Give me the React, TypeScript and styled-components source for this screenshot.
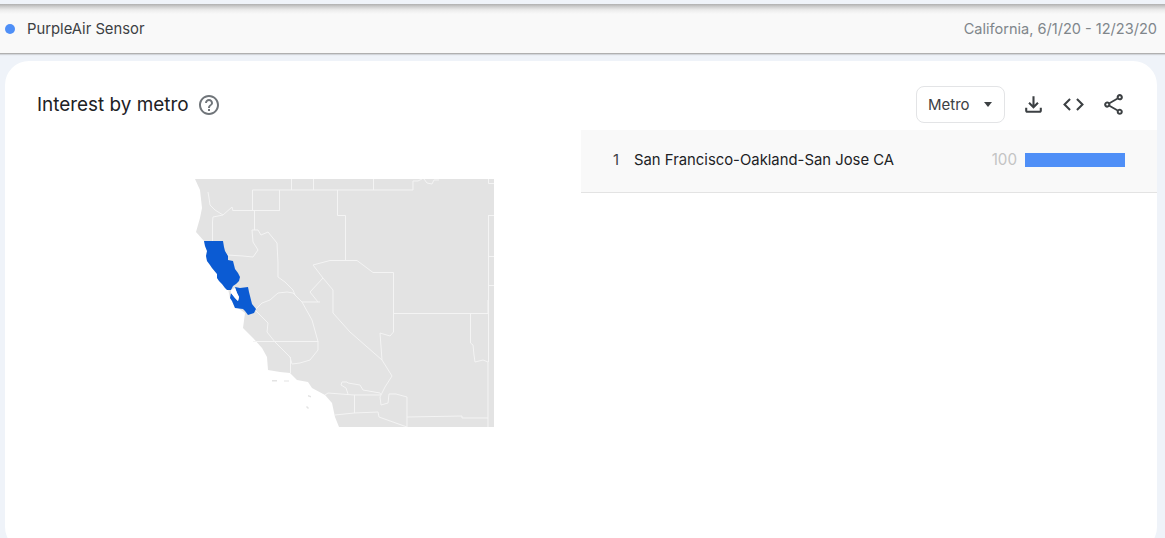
import styled, { createGlobalStyle } from 'styled-components';

const GlobalStyle = createGlobalStyle`
  html, body {
    margin: 0;
    padding: 0;
    height: 538px;
    overflow: hidden;
    background: #eff3f9;
    font-family: Inter, "Liberation Sans", sans-serif;
  }
`;

const Page = styled.div`
  height: 538px;
  overflow: hidden;
  background: #eff3f9;
  padding-top: 4px;
  box-sizing: border-box;
`;

const TermBar = styled.header`
  height: 49px;
  padding: 0 8px 0 5px;
  display: flex;
  align-items: center;
  justify-content: space-between;
  background: linear-gradient(#b0b0b0 0, #d2d2d2 3px, #ececec 6px, #f9f9f9 10px);
  border-bottom: 1px solid #b0b0b0;
  box-shadow: 0 1px 1px rgba(0, 0, 0, 0.12);
`;

const TermName = styled.div`
  display: flex;
  align-items: center;
  gap: 12px;
  font-size: 14.8px;
  color: #3c4043;
`;

const Dot = styled.span`
  width: 10px;
  height: 10px;
  border-radius: 50%;
  background: #4f8ff7;
`;

const TermMeta = styled.div`
  font-size: 14.55px;
  color: #80868b;
`;

const Card = styled.section`
  margin: 7px 8px 0 5px;
  height: 490px;
  background: #fff;
  border-radius: 24px;
  overflow: hidden;
`;

const CardHeader = styled.div`
  height: 69px;
  padding: 25px 32px 0;
  box-sizing: border-box;
  display: flex;
  justify-content: space-between;
  align-items: flex-start;
`;

const TitleGroup = styled.div`
  display: flex;
  align-items: center;
  gap: 8px;
  height: 37px;
`;

const Title = styled.h2`
  margin: 0;
  font-size: 18.9px;
  font-weight: 400;
  color: #202124;
`;

const Actions = styled.div`
  display: flex;
  align-items: center;
`;

const SelectBox = styled.div`
  width: 89px;
  height: 37px;
  box-sizing: border-box;
  padding: 0 12px 0 11px;
  display: flex;
  align-items: center;
  justify-content: space-between;
  border: 1px solid #e3e4e6;
  border-radius: 8px;
  font-size: 15px;
  color: #3c4043;
`;

const Caret = styled.span`
  width: 0;
  height: 0;
  border-left: 4.5px solid transparent;
  border-right: 4.5px solid transparent;
  border-top: 5px solid #3c4043;
`;

const IconRow = styled.div`
  display: flex;
  gap: 15px;
  margin-left: 16px;
  margin-right: -1px;
`;

const IconSlot = styled.svg`
  display: block;
  width: 25px;
  height: 25px;
  fill: #3c4043;
`;

const HelpIcon = styled(IconSlot)`
  width: 24px;
  height: 24px;
  fill: #70757a;
`;

const Body = styled.div`
  display: grid;
  grid-template-columns: 576px 1fr;
`;

const MapPane = styled.div`
  padding: 49px 0 0 190px;
`;

const MapSvg = styled.svg`
  display: block;
  width: 299px;
  height: 248px;
`;

const Row = styled.div`
  height: 63px;
  box-sizing: border-box;
  display: flex;
  align-items: center;
  padding: 0 32px 3px;
  background: #f9f9f9;
  border-bottom: 1px solid #e3e3e3;
  font-size: 14.85px;
  color: #202124;
`;

const Rank = styled.span`
  width: 21px;
  color: #3c4043;
`;

const Place = styled.span`
  flex: 1;
`;

const Score = styled.span`
  color: #c4c4c4;
  margin-right: 8px;
  font-size: 15.2px;
`;

const BarTrack = styled.div`
  width: 100px;
  height: 14px;
  background: #4f8ff7;
`;

const LAND =
  'M195 179 L200 190 L202 208 L200 218 L196 232 L204 241 L205 246 L207 251 L206 256 L207 261 L210 265 L212 268 L217 274 L217 278 L222 284 L225 288 L228 289 L230 298 L232 301 L235 308 L238 308 L245 313 L243 328 L253 338 L262 348 L267 357 L268 370 L280 372 L290 373 L297 380 L308 382 L312 388 L325 395 L332 403 L335 417 L339 427 L494 427 L494 179 Z';

const BLUE_NORTH =
  'M204 241 L223 241 L224 247 L225 251 L228 256 L228 260 L233 261 L234 265 L235 269 L238 273 L240 277 L239 281 L236 284 L233 286 L231 290 L227 290 L225 288 L222 284 L219 281 L217 278 L217 274 L212 268 L210 265 L207 261 L206 256 L207 251 L205 246 Z';

const BLUE_SOUTH =
  'M235 287 L240 288 L248 287 L249 292 L250 296 L252 304 L256 309 L254 313 L248 315 L245 311 L243 309 L235 308 L232 301 L230 298 L231 293 L235 298 L238 301 L239 297 L237 293 Z';

const BAY = 'M231 290 L235 288 L237 293 L239 297 L238 301 L235 298 L231 293 Z';

const BORDERS = [
  'M291.5 179 V190 M313.5 179 V190 M373.5 179 V190',
  'M252.5 190 H413 L413 181 L418 181 L422 179 M424 179 L427 183 L432 184 L434 180 L439 180',
  'M252.5 190 V210.5 M279.5 190 V211 M233 210.5 H279 M254.5 211 V230',
  'M208 192 L209 198 L210 205 L215 210 L223 215 L232 207 L233 211',
  'M223 215 L213 217 L212.5 222 V241',
  'M252 230 L253 242 L258 250 L253 257 L243 256 L227 255',
  'M252 230 H258 L261 235 L268 232 L277 243 L278 263 L278 277 L285 282 L293 290 L295 295 L302 302 H320',
  'M337.5 190 V215.5 H345.5 V260.5 H330 L313 265 L323 278 L310 292 L318 302',
  'M323 278 L333 290 V313 L350 332 L382 360',
  'M345 260.5 H357 L373 272.5 H393.5 V332 L390 336 L380 333 L382 360 L387 368 L392 376 L385 387 L380 397 L381 405 L388 403 L389 394 H396 L407 397 V427',
  'M393.5 313.5 H488 V300 M488.5 179 V183.5 H494 M488.5 215 V362 M488.5 215.5 H494 M488.5 256.5 H494 M488.5 285.5 H494',
  'M470.5 313 V343 L473 345 L474 355 L475 362 L483 360 L488 362 V427',
  'M253 341.5 H318 L312 320 L302 302 M318 341 V350 L310 360 L300 363 L292 364 L290 357 L275 342 L267 332 L268 323 L255 310',
  'M290.5 357 V373',
  'M255 310 L262 303 L270 300 L278 293 L287 292 L293 293 L302 302',
  'M325 395 L328 393 L354 395 H380 M354.5 395 V413 M335 415 L354 413 L378 412 L379 417 L407 427 M407 417 L462 416 V418 H488',
  'M342 382 H347 L348 383 L360 385 L363 390 L380 393 L381 395 M342 382 L341 385 L346 388 L348 394',
];

function InterestMap() {
  return (
    <MapSvg viewBox="195 179 299 248">
      <path d={LAND} fill="#e3e3e3" />
      <path d="M272 380 h5 v1.5 h-5z M284 380.5 h5 v1 h-5z M308 395 l3 1 v1.5 l-3 -1z M307 406 l2 2 -1 1 -2 -2z" fill="#e3e3e3" />
      {BORDERS.map((d) => (
        <path key={d} d={d} fill="none" stroke="#f4f4f4" strokeWidth="1" />
      ))}
      <path d={BLUE_NORTH} fill="#0b5bd3" />
      <path d={BLUE_SOUTH} fill="#0b5bd3" />
      <path d={BAY} fill="#fff" />
    </MapSvg>
  );
}

export default function App() {
  return (
    <Page>
      <GlobalStyle />
      <TermBar>
        <TermName>
          <Dot />
          <span>PurpleAir Sensor</span>
        </TermName>
        <TermMeta>California, 6/1/20 - 12/23/20</TermMeta>
      </TermBar>
      <Card>
        <CardHeader>
          <TitleGroup>
            <Title>Interest by metro</Title>
            <HelpIcon viewBox="0 0 24 24">
              <path d="M11 18h2v-2h-2v2zm1-16C6.48 2 2 6.48 2 12s4.48 10 10 10 10-4.48 10-10S17.52 2 12 2zm0 18c-4.41 0-8-3.59-8-8s3.59-8 8-8 8 3.59 8 8-3.59 8-8 8zm0-14c-2.21 0-4 1.79-4 4h2c0-1.1.9-2 2-2s2 .9 2 2c0 2-3 1.75-3 5h2c0-2.25 3-2.5 3-5 0-2.21-1.79-4-4-4z" />
            </HelpIcon>
          </TitleGroup>
          <Actions>
            <SelectBox>
              Metro
              <Caret />
            </SelectBox>
            <IconRow>
              <IconSlot viewBox="0 0 24 24">
                <path d="M18 15v3H6v-3H4v3c0 1.1.9 2 2 2h12c1.1 0 2-.9 2-2v-3h-2zm-1-4l-1.41-1.41L13 12.17V4h-2v8.17L8.41 9.59 7 11l5 5 5-5z" />
              </IconSlot>
              <IconSlot viewBox="0 0 24 24">
                <path d="M9.4 16.6L4.8 12l4.6-4.6L8 6l-6 6 6 6 1.4-1.4zm5.2 0l4.6-4.6-4.6-4.6L16 6l6 6-6 6-1.4-1.4z" />
              </IconSlot>
              <IconSlot viewBox="0 0 24 24">
                <path d="M18 16.08c-.76 0-1.44.3-1.96.77L8.91 12.7c.05-.23.09-.46.09-.7s-.04-.47-.09-.7l7.05-4.11c.54.5 1.25.81 2.04.81 1.66 0 3-1.34 3-3s-1.34-3-3-3-3 1.34-3 3c0 .24.04.47.09.7L8.04 9.81C7.5 9.31 6.79 9 6 9c-1.66 0-3 1.34-3 3s1.34 3 3 3c.79 0 1.5-.31 2.04-.81l7.12 4.16c-.05.21-.08.43-.08.65 0 1.61 1.31 2.92 2.92 2.92 1.61 0 2.92-1.31 2.92-2.92s-1.31-2.92-2.92-2.92zM18 4c.55 0 1 .45 1 1s-.45 1-1 1-1-.45-1-1 .45-1 1-1zM6 13c-.55 0-1-.45-1-1s.45-1 1-1 1 .45 1 1-.45 1-1 1zm12 7.02c-.55 0-1-.45-1-1s.45-1 1-1 1 .45 1 1-.45 1-1 1z" />
              </IconSlot>
            </IconRow>
          </Actions>
        </CardHeader>
        <Body>
          <MapPane>
            <InterestMap />
          </MapPane>
          <div>
            <Row>
              <Rank>1</Rank>
              <Place>San Francisco-Oakland-San Jose CA</Place>
              <Score>100</Score>
              <BarTrack />
            </Row>
          </div>
        </Body>
      </Card>
    </Page>
  );
}
